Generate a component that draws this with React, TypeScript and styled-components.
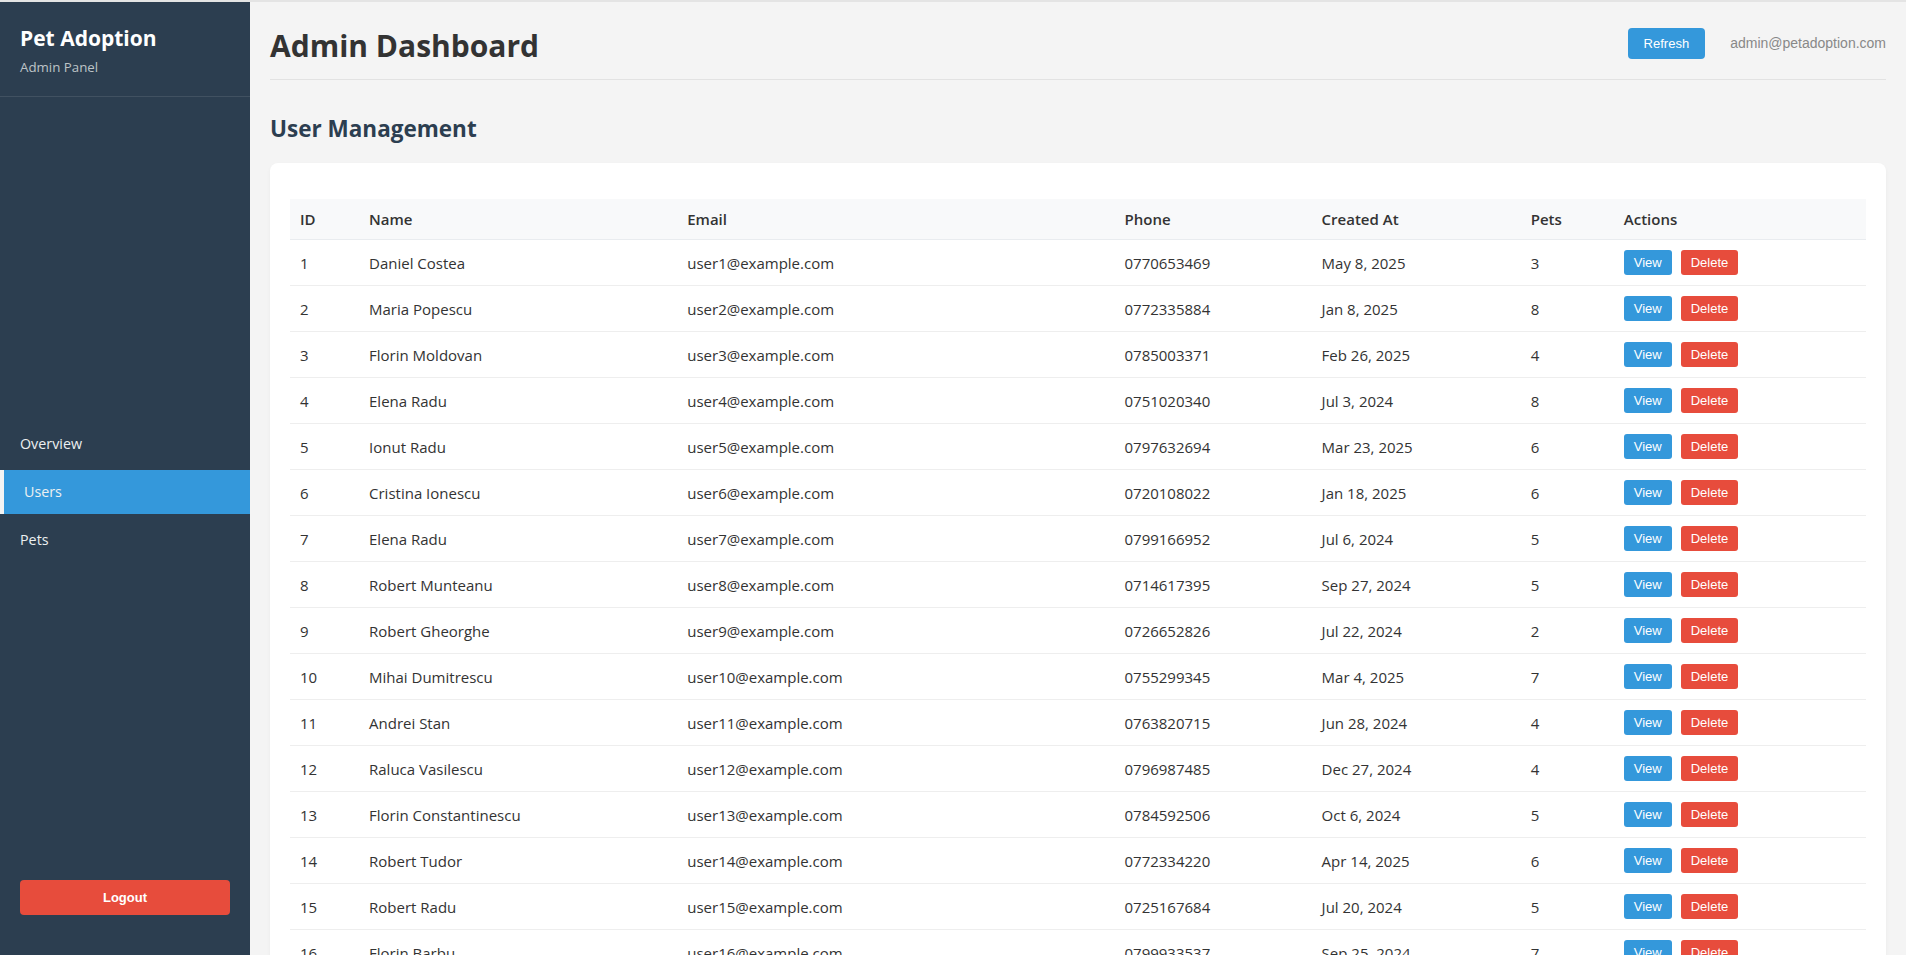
import React from "react";
import styled, { createGlobalStyle } from "styled-components";

const GlobalStyle = createGlobalStyle`
  html, body {
    margin: 0;
    padding: 0;
    overflow: hidden;
  }
  body {
    font-family: "Open Sans", "Noto Sans", sans-serif;
    color: #333;
  }
  * { box-sizing: border-box; }
`;

const Layout = styled.div`
  display: flex;
  height: 100vh;
  border-top: 2px solid #e4e4e4;
  overflow: hidden;
`;

const Sidebar = styled.aside`
  width: 250px;
  flex-shrink: 0;
  background: #2c3e50;
  color: #fff;
  display: flex;
  flex-direction: column;
`;

const Brand = styled.div`
  padding: 21px 20px 20px;
  border-bottom: 1px solid rgba(255, 255, 255, 0.1);
`;

const BrandTitle = styled.h1`
  margin: 0;
  font-size: 21px;
  line-height: 30px;
  font-weight: 700;
  color: #fff;
`;

const BrandSub = styled.div`
  margin-top: 5px;
  font-size: 13.3px;
  line-height: 18px;
  color: #bdc3c7;
`;

const Nav = styled.nav`
  flex: 1;
  display: flex;
  flex-direction: column;
  justify-content: center;
  gap: 4px;
  padding-top: 27px;
`;

const NavItem = styled.a<{ $active?: boolean }>`
  display: block;
  padding: 12px 20px;
  font-size: 14.3px;
  line-height: 20px;
  color: #ecf0f1;
  text-decoration: none;
  background: ${(p) => (p.$active ? "#3498db" : "transparent")};
  border-left: ${(p) => (p.$active ? "4px solid #f4f4f4" : "none")};
`;

const SidebarFooter = styled.div`
  padding: 20px 20px 40px;
`;

const LogoutButton = styled.button`
  width: 100%;
  height: 35px;
  border: none;
  border-radius: 4px;
  background: #e74c3c;
  color: #fff;
  font-family: "Liberation Sans", Arial, sans-serif;
  font-size: 13px;
  font-weight: 700;
  cursor: pointer;
`;

const Main = styled.main`
  flex: 1;
  min-width: 0;
  background: #f4f4f4;
  padding: 20px;
  overflow: hidden;
`;

const Header = styled.header`
  display: flex;
  align-items: center;
  justify-content: space-between;
  padding-bottom: 15px;
  border-bottom: 1px solid #e2e2e2;
`;

const PageTitle = styled.h1`
  margin: 0;
  padding-top: 6px;
  font-size: 30px;
  line-height: 36px;
  font-weight: 700;
  color: #333;
`;

const HeaderRight = styled.div`
  display: flex;
  align-items: center;
  gap: 25px;
`;

const PrimaryButton = styled.button`
  height: 31px;
  padding: 0 16px;
  border: none;
  border-radius: 4px;
  background: #3498db;
  color: #fff;
  font-family: "Liberation Sans", Arial, sans-serif;
  font-size: 13px;
  cursor: pointer;
`;

const AdminEmail = styled.span`
  font-family: "Liberation Sans", Arial, sans-serif;
  font-size: 14px;
  color: #888;
`;

const SectionTitle = styled.h2`
  margin: 33px 0 19px;
  font-size: 22.5px;
  line-height: 31px;
  font-weight: 700;
  color: #2c3e50;
`;

const Card = styled.section`
  background: #fff;
  border-radius: 8px;
  padding: 36px 20px 20px;
  box-shadow: 0 2px 4px rgba(0, 0, 0, 0.04);
`;

const Table = styled.table`
  width: 100%;
  border-collapse: collapse;
  table-layout: fixed;
`;

const Th = styled.th`
  text-align: left;
  padding: 10px;
  height: 40px;
  font-size: 15px;
  line-height: 20px;
  font-weight: 600;
  color: #333;
  background: #f8f9fa;
  border-bottom: 1px solid #e9ecef;
`;

const Td = styled.td`
  padding: 10px;
  height: 46px;
  font-size: 15px;
  line-height: 20px;
  color: #333;
  border-bottom: 1px solid #eee;
  white-space: nowrap;
`;

const ActionGroup = styled.div`
  display: flex;
  gap: 9px;
`;

const SmallButton = styled.button<{ $variant: "view" | "delete" }>`
  height: 25px;
  padding: 0 10px;
  border: none;
  border-radius: 3px;
  background: ${(p) => (p.$variant === "view" ? "#3498db" : "#e74c3c")};
  color: #fff;
  font-family: "Liberation Sans", Arial, sans-serif;
  font-size: 13px;
  cursor: pointer;
`;

const columns: { label: string; width: number }[] = [
  { label: "ID", width: 69 },
  { label: "Name", width: 318 },
  { label: "Email", width: 437 },
  { label: "Phone", width: 197 },
  { label: "Created At", width: 209 },
  { label: "Pets", width: 93 },
  { label: "Actions", width: 252 },
];

const users: [string, string, string, number][] = [
  ["Daniel Costea", "0770653469", "May 8, 2025", 3],
  ["Maria Popescu", "0772335884", "Jan 8, 2025", 8],
  ["Florin Moldovan", "0785003371", "Feb 26, 2025", 4],
  ["Elena Radu", "0751020340", "Jul 3, 2024", 8],
  ["Ionut Radu", "0797632694", "Mar 23, 2025", 6],
  ["Cristina Ionescu", "0720108022", "Jan 18, 2025", 6],
  ["Elena Radu", "0799166952", "Jul 6, 2024", 5],
  ["Robert Munteanu", "0714617395", "Sep 27, 2024", 5],
  ["Robert Gheorghe", "0726652826", "Jul 22, 2024", 2],
  ["Mihai Dumitrescu", "0755299345", "Mar 4, 2025", 7],
  ["Andrei Stan", "0763820715", "Jun 28, 2024", 4],
  ["Raluca Vasilescu", "0796987485", "Dec 27, 2024", 4],
  ["Florin Constantinescu", "0784592506", "Oct 6, 2024", 5],
  ["Robert Tudor", "0772334220", "Apr 14, 2025", 6],
  ["Robert Radu", "0725167684", "Jul 20, 2024", 5],
  ["Florin Barbu", "0799933537", "Sep 25, 2024", 7],
];

export default function App() {
  return (
    <>
      <GlobalStyle />
      <Layout>
        <Sidebar>
          <Brand>
            <BrandTitle>Pet Adoption</BrandTitle>
            <BrandSub>Admin Panel</BrandSub>
          </Brand>
          <Nav>
            <NavItem>Overview</NavItem>
            <NavItem $active>Users</NavItem>
            <NavItem>Pets</NavItem>
          </Nav>
          <SidebarFooter>
            <LogoutButton>Logout</LogoutButton>
          </SidebarFooter>
        </Sidebar>
        <Main>
          <Header>
            <PageTitle>Admin Dashboard</PageTitle>
            <HeaderRight>
              <PrimaryButton>Refresh</PrimaryButton>
              <AdminEmail>admin@petadoption.com</AdminEmail>
            </HeaderRight>
          </Header>
          <SectionTitle>User Management</SectionTitle>
          <Card>
            <Table>
              <colgroup>
                {columns.map((c) => (
                  <col key={c.label} style={{ width: c.width }} />
                ))}
              </colgroup>
              <thead>
                <tr>
                  {columns.map((c) => (
                    <Th key={c.label}>{c.label}</Th>
                  ))}
                </tr>
              </thead>
              <tbody>
                {users.map(([name, phone, created, pets], i) => (
                  <tr key={i}>
                    <Td>{i + 1}</Td>
                    <Td>{name}</Td>
                    <Td>user{i + 1}@example.com</Td>
                    <Td>{phone}</Td>
                    <Td>{created}</Td>
                    <Td>{pets}</Td>
                    <Td>
                      <ActionGroup>
                        <SmallButton $variant="view">View</SmallButton>
                        <SmallButton $variant="delete">Delete</SmallButton>
                      </ActionGroup>
                    </Td>
                  </tr>
                ))}
              </tbody>
            </Table>
          </Card>
        </Main>
      </Layout>
    </>
  );
}
